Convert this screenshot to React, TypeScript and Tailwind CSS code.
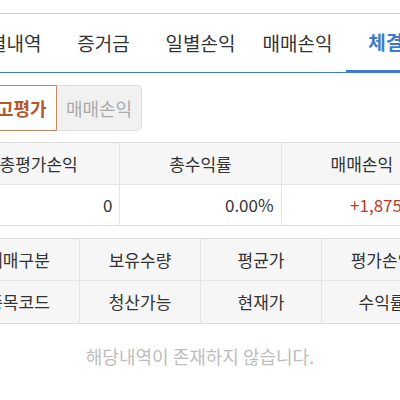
import React from 'react';

const tabs = ['월별내역', '증거금', '일별손익', '매매손익', '체결가'];

const summary = [
    { label: '총평가손익', value: '0', color: 'text-[#333]' },
    { label: '총수익률', value: '0.00%', color: 'text-[#333]' },
    { label: '매매손익', value: '+1,875,000', color: 'text-[#c0392b]' },
];

const headRow1 = ['매매구분', '보유수량', '평균가', '평가손익'];
const headRow2 = ['종목코드', '청산가능', '현재가', '수익률'];

export default function App() {
    return (
        <div className="w-[400px] h-[400px] overflow-hidden bg-white font-['Noto_Sans_CJK_KR','Noto_Sans',sans-serif]">
            <div className="h-[14px] border-b border-[#c8c8c8]" />
            <div className="-ml-[42px] w-[485px]">
                {/* tabs */}
                <div className="flex h-[59px] border-b border-[#3d7cc9]">
                    {tabs.map((t, i) => (
                        <div
                            key={t}
                            className={
                                i === 4
                                    ? 'w-[97px] flex items-center justify-center text-[19px] font-bold text-[#3d7cc9] border-b-[3px] border-[#3d7cc9] mb-[-1px] pt-[1px]'
                                    : 'w-[97px] flex items-center justify-center text-[19px] text-[#333]'
                            }
                        >
                            {t}
                        </div>
                    ))}
                </div>

                {/* toggle buttons */}
                <div className="flex mt-[12px] h-[46px] ml-[12px]">
                    <div className="w-[87px] flex items-center justify-center border border-[#c8845a] rounded-l-[5px] bg-white text-[18px] font-bold text-[#b4572b]">
                        잔고평가
                    </div>
                    <div className="w-[85px] flex items-center justify-center border border-l-0 border-[#dddddd] rounded-r-[5px] bg-[#f1f1f1] text-[18px] text-[#aaaaaa]">
                        매매손익
                    </div>
                </div>

                {/* summary table */}
                <div className="mt-[11px] w-[484px] border-y border-[#dcdcdc] text-[17px]">
                    <div className="grid grid-cols-3 h-[42px] bg-[#f6f6f6] border-b border-[#e4e4e4]">
                        {summary.map((s, i) => (
                            <div
                                key={s.label}
                                className={
                                    i === 0
                                        ? 'flex items-center justify-center text-[#333]'
                                        : 'flex items-center justify-center text-[#333] border-l border-[#e4e4e4]'
                                }
                            >
                                {s.label}
                            </div>
                        ))}
                    </div>
                    <div className="grid grid-cols-3 h-[40px] bg-white">
                        {summary.map((s, i) => (
                            <div
                                key={s.label}
                                className={
                                    (i === 0 ? '' : 'border-l border-[#e4e4e4] ') +
                                    'flex items-center justify-end pr-[7px] ' +
                                    s.color
                                }
                            >
                                {s.value}
                            </div>
                        ))}
                    </div>
                </div>

                {/* holdings header */}
                <div className="mt-[12px] w-[484px] border-y border-[#dcdcdc] bg-[#f6f6f6] text-[17px] text-[#333]">
                    <div className="grid grid-cols-4 h-[42px] border-b border-[#e4e4e4]">
                        {headRow1.map((h, i) => (
                            <div
                                key={h}
                                className={
                                    i === 0
                                        ? 'flex items-center justify-center'
                                        : 'flex items-center justify-center border-l border-[#e4e4e4]'
                                }
                            >
                                {h}
                            </div>
                        ))}
                    </div>
                    <div className="grid grid-cols-4 h-[42px]">
                        {headRow2.map((h, i) => (
                            <div
                                key={h}
                                className={
                                    i === 0
                                        ? 'flex items-center justify-center'
                                        : 'flex items-center justify-center border-l border-[#e4e4e4]'
                                }
                            >
                                {h}
                            </div>
                        ))}
                    </div>
                </div>

                {/* empty */}
                <div className="w-[484px] h-[64px] flex items-center justify-center text-[18px] text-[#bdbdbd]">
                    해당내역이 존재하지 않습니다.
                </div>
            </div>
        </div>
    );
}
